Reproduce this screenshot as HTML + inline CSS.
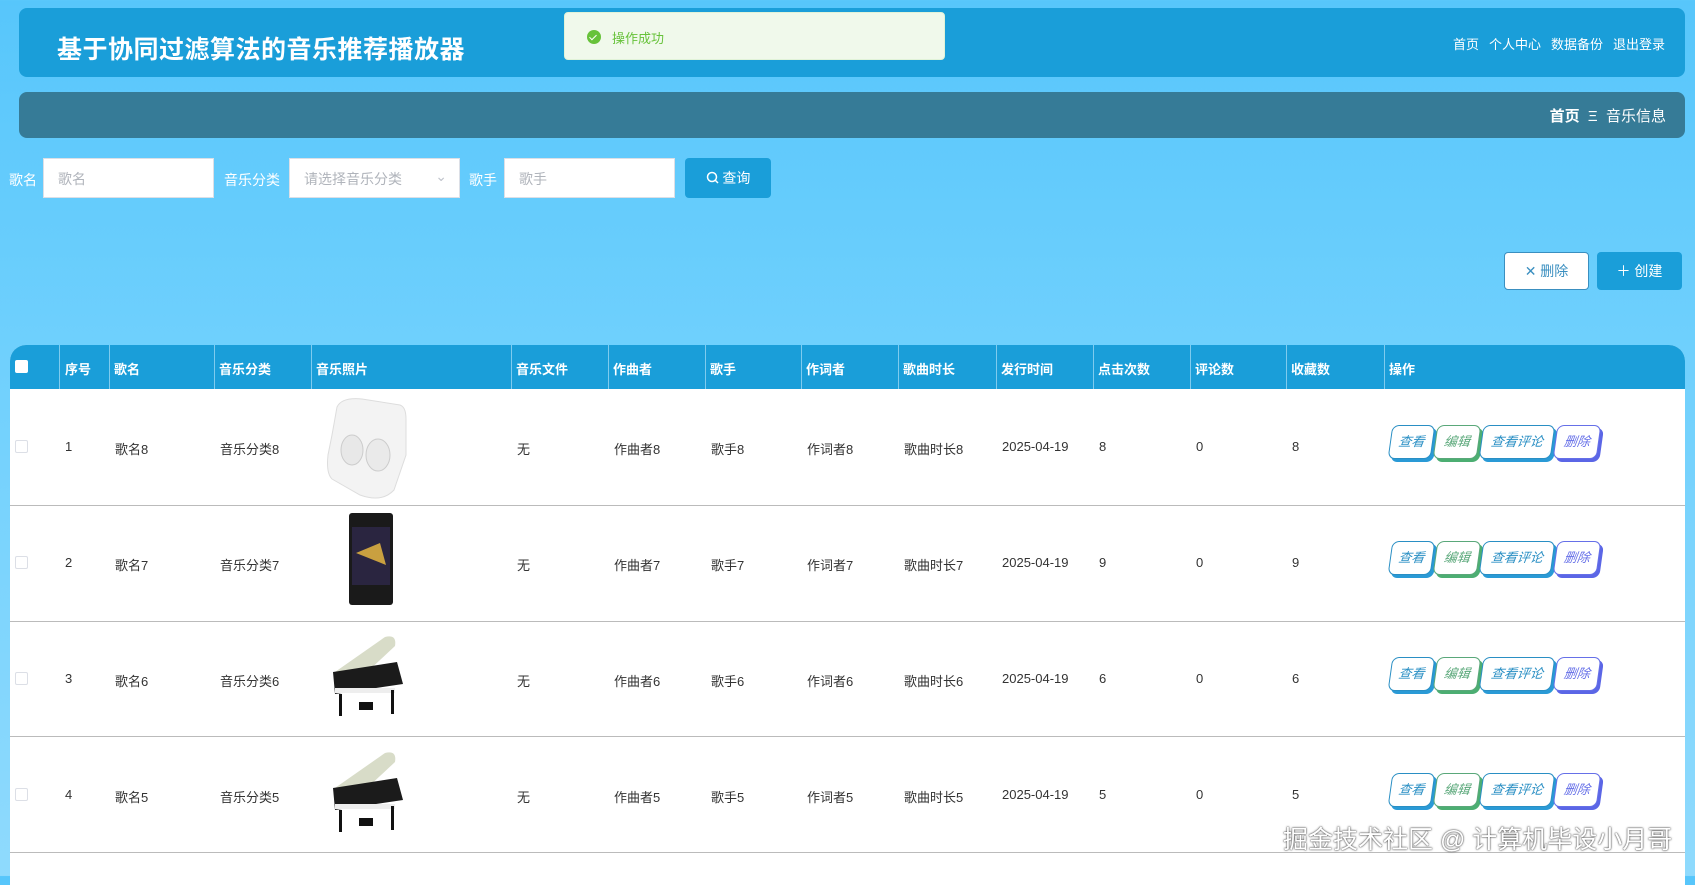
<!DOCTYPE html>
<html><head><meta charset="utf-8"><style>
*{box-sizing:border-box;margin:0;padding:0}
body{width:1695px;height:876px;overflow:hidden;font-family:"Liberation Sans","Noto Sans CJK SC",sans-serif;background:linear-gradient(180deg,#57c6fb 0%,#6fd0fd 40%,#8fdafd 100%);position:relative;color:#333}
.hdr{position:absolute;left:19px;top:8px;width:1666px;height:69px;background:#1a9ed9;border-radius:8px}
.title{position:absolute;left:38px;top:22px;font-size:25px;font-weight:bold;color:#fff;letter-spacing:0.5px}
.nav{position:absolute;right:20px;top:26px;font-size:13px;color:#fff}
.nav span{margin-left:10px}
.toast{position:absolute;left:564px;top:12px;width:381px;height:48px;background:#f0f9eb;border:1px solid #e1f3d8;border-radius:4px;font-size:13px;color:#67c23a}
.toast i{position:absolute;left:22px;top:17px;width:14px;height:14px;border-radius:50%;background:#67c23a}
.toast i:after{content:"";position:absolute;left:4px;top:3px;width:3px;height:6px;border:solid #fff;border-width:0 1.5px 1.5px 0;transform:rotate(45deg)}
.toast span{position:absolute;left:47px;top:15px}
.bc{position:absolute;left:19px;top:92px;width:1666px;height:46px;background:#367b97;border-radius:8px;color:#fff}
.bc div{position:absolute;right:19px;top:13px;font-size:15px}
.lbl{position:absolute;top:170px;font-size:14px;color:#fff}
.inp{position:absolute;top:158px;height:40px;background:#fff;border:1px solid #dcdfe6;font-size:14px;color:#b0b4bb;padding:10px 14px}
.btn{position:absolute;border-radius:4px;font-size:14px;text-align:center}
.tbl{position:absolute;left:10px;top:345px;width:1675px;height:540px;background:#fff;border-radius:16px 16px 0 0;overflow:hidden}
.th{position:absolute;top:0;height:44px;background:#1a9ed9;width:100%}
.c{position:absolute;font-size:13px}
.hc{color:#fff;font-weight:bold;top:14px}
.vl{position:absolute;top:0;width:1px;height:44px;background:#7fcbee}
.hl{position:absolute;left:0;width:100%;height:1px;background:#bbb}
.cb{position:absolute;left:5px;width:13px;height:13px;border:1px solid #dcdfe6;border-radius:2px;background:#fff}
.ab{position:absolute;height:34px;border:1px solid;border-radius:7px;background:#fff;font-size:13px;font-style:italic;text-align:center;line-height:31px;transform:skewX(-8deg)}
</style></head><body>
<div class="hdr"><div class="title">基于协同过滤算法的音乐推荐播放器</div>
<div class="nav"><span>首页</span><span>个人中心</span><span>数据备份</span><span>退出登录</span></div></div>
<div class="toast"><i></i><span>操作成功</span></div>
<div class="bc"><div><b>首页</b> &nbsp;Ξ&nbsp; 音乐信息</div></div>
<div class="lbl" style="left:9px">歌名</div><div class="inp" style="left:43px;width:171px">歌名</div>
<div class="lbl" style="left:224px">音乐分类</div><div class="inp" style="left:289px;width:171px">请选择音乐分类<span style="position:absolute;right:12px;top:9px;color:#c0c4cc">⌄</span></div>
<div class="lbl" style="left:469px">歌手</div><div class="inp" style="left:504px;width:171px">歌手</div>
<div class="btn" style="left:685px;top:158px;width:86px;height:40px;background:#1a9ed9;color:#fff;line-height:40px"><svg width="13" height="13" viewBox="0 0 13 13" style="vertical-align:-1px"><circle cx="6" cy="6" r="4.5" fill="none" stroke="#fff" stroke-width="1.5"/><path d="M9 9 L12 12" stroke="#fff" stroke-width="1.5"/></svg> 查询</div>
<div class="btn" style="left:1504px;top:252px;width:85px;height:38px;background:#fff;border:1px solid #3a8fc0;color:#3a8fc0;line-height:36px">✕ 删除</div>
<div class="btn" style="left:1597px;top:252px;width:85px;height:38px;background:#1a9ed9;color:#fff;line-height:38px">＋ 创建</div>
<div class="tbl">
<div class="th"></div>
<div style="position:absolute;left:5px;top:15px;width:13px;height:13px;background:#fff;border-radius:2px"></div>
<div class="vl" style="left:49px"></div><div class="vl" style="left:99px"></div><div class="vl" style="left:204px"></div><div class="vl" style="left:301px"></div><div class="vl" style="left:501px"></div><div class="vl" style="left:598px"></div><div class="vl" style="left:695px"></div><div class="vl" style="left:791px"></div><div class="vl" style="left:888px"></div><div class="vl" style="left:986px"></div><div class="vl" style="left:1083px"></div><div class="vl" style="left:1180px"></div><div class="vl" style="left:1276px"></div><div class="vl" style="left:1374px"></div>
<div class="c hc" style="left:55px">序号</div><div class="c hc" style="left:104px">歌名</div><div class="c hc" style="left:209px">音乐分类</div><div class="c hc" style="left:306px">音乐照片</div><div class="c hc" style="left:506px">音乐文件</div><div class="c hc" style="left:603px">作曲者</div><div class="c hc" style="left:700px">歌手</div><div class="c hc" style="left:796px">作词者</div><div class="c hc" style="left:893px">歌曲时长</div><div class="c hc" style="left:991px">发行时间</div><div class="c hc" style="left:1088px">点击次数</div><div class="c hc" style="left:1185px">评论数</div><div class="c hc" style="left:1281px">收藏数</div><div class="c hc" style="left:1379px">操作</div>

<div class="hl" style="top:160px"></div><div class="hl" style="top:276px"></div><div class="hl" style="top:391px"></div><div class="hl" style="top:507px"></div>

<div class="cb" style="top:95px"></div>
<div class="c" style="left:55px;top:94px">1</div><div class="c" style="left:105px;top:94px">歌名8</div><div class="c" style="left:210px;top:94px">音乐分类8</div>
<svg style="position:absolute;left:312px;top:50px" width="100" height="105"><path d="M15 12 Q20 2 40 4 L78 10 Q84 12 84 24 L84 60 L72 95 Q60 108 38 100 L10 84 Q4 78 6 60 L10 40Z" fill="#f3f3f3" stroke="#ddd"/><ellipse cx="30" cy="55" rx="11" ry="15" fill="#e8e8e8" stroke="#ccc"/><ellipse cx="56" cy="60" rx="12" ry="16" fill="#eaeaea" stroke="#ccc"/></svg>
<div class="c" style="left:507px;top:94px">无</div><div class="c" style="left:604px;top:94px">作曲者8</div><div class="c" style="left:701px;top:94px">歌手8</div><div class="c" style="left:797px;top:94px">作词者8</div><div class="c" style="left:894px;top:94px">歌曲时长8</div><div class="c" style="left:992px;top:94px">2025-04-19</div><div class="c" style="left:1089px;top:94px">8</div><div class="c" style="left:1186px;top:94px">0</div><div class="c" style="left:1282px;top:94px">8</div>

<div class="cb" style="top:211px"></div>
<div class="c" style="left:55px;top:210px">2</div><div class="c" style="left:105px;top:210px">歌名7</div><div class="c" style="left:210px;top:210px">音乐分类7</div>
<svg style="position:absolute;left:330px;top:168px" width="60" height="100"><rect x="9" y="0" width="44" height="92" rx="3" fill="#1a1a1a"/><rect x="12" y="14" width="38" height="58" fill="#2a2540"/><path d="M16 40 L40 30 L46 52Z" fill="#c9a040"/></svg>
<div class="c" style="left:507px;top:210px">无</div><div class="c" style="left:604px;top:210px">作曲者7</div><div class="c" style="left:701px;top:210px">歌手7</div><div class="c" style="left:797px;top:210px">作词者7</div><div class="c" style="left:894px;top:210px">歌曲时长7</div><div class="c" style="left:992px;top:210px">2025-04-19</div><div class="c" style="left:1089px;top:210px">9</div><div class="c" style="left:1186px;top:210px">0</div><div class="c" style="left:1282px;top:210px">9</div>

<div class="cb" style="top:327px"></div>
<div class="c" style="left:55px;top:326px">3</div><div class="c" style="left:105px;top:326px">歌名6</div><div class="c" style="left:210px;top:326px">音乐分类6</div>
<svg style="position:absolute;left:315px;top:287px" width="90" height="90"><path d="M10 40 L60 5 Q72 2 70 14 L40 42Z" fill="#d8dcc8"/><path d="M8 40 L72 30 L78 52 L10 62Z" fill="#1b1b1b"/><rect x="10" y="56" width="60" height="5" fill="#eee"/><rect x="14" y="62" width="3" height="22" fill="#111"/><rect x="66" y="58" width="3" height="24" fill="#111"/><rect x="34" y="70" width="14" height="8" fill="#111"/></svg>
<div class="c" style="left:507px;top:326px">无</div><div class="c" style="left:604px;top:326px">作曲者6</div><div class="c" style="left:701px;top:326px">歌手6</div><div class="c" style="left:797px;top:326px">作词者6</div><div class="c" style="left:894px;top:326px">歌曲时长6</div><div class="c" style="left:992px;top:326px">2025-04-19</div><div class="c" style="left:1089px;top:326px">6</div><div class="c" style="left:1186px;top:326px">0</div><div class="c" style="left:1282px;top:326px">6</div>

<div class="cb" style="top:443px"></div>
<div class="c" style="left:55px;top:442px">4</div><div class="c" style="left:105px;top:442px">歌名5</div><div class="c" style="left:210px;top:442px">音乐分类5</div>
<svg style="position:absolute;left:315px;top:403px" width="90" height="90"><path d="M10 40 L60 5 Q72 2 70 14 L40 42Z" fill="#d8dcc8"/><path d="M8 40 L72 30 L78 52 L10 62Z" fill="#1b1b1b"/><rect x="10" y="56" width="60" height="5" fill="#eee"/><rect x="14" y="62" width="3" height="22" fill="#111"/><rect x="66" y="58" width="3" height="24" fill="#111"/><rect x="34" y="70" width="14" height="8" fill="#111"/></svg>
<div class="c" style="left:507px;top:442px">无</div><div class="c" style="left:604px;top:442px">作曲者5</div><div class="c" style="left:701px;top:442px">歌手5</div><div class="c" style="left:797px;top:442px">作词者5</div><div class="c" style="left:894px;top:442px">歌曲时长5</div><div class="c" style="left:992px;top:442px">2025-04-19</div><div class="c" style="left:1089px;top:442px">5</div><div class="c" style="left:1186px;top:442px">0</div><div class="c" style="left:1282px;top:442px">5</div>

<div style="position:absolute;left:0;top:80px;width:100%">
<div class="ab" style="left:1380px;width:43px;color:#2a8fc4;border-color:#2a8fc4;box-shadow:3px 3px 0 #2a9ad6">查看</div><div class="ab" style="left:1425px;width:44px;color:#5aa87a;border-color:#5aa87a;box-shadow:3px 3px 0 #4cae72">编辑</div><div class="ab" style="left:1471px;width:72px;color:#2a8fc4;border-color:#2a8fc4;box-shadow:3px 3px 0 #2a9ad6">查看评论</div><div class="ab" style="left:1545px;width:44px;color:#6670e8;border-color:#6670e8;box-shadow:3px 3px 0 #5b66e6">删除</div></div>
<div style="position:absolute;left:0;top:196px;width:100%">
<div class="ab" style="left:1380px;width:43px;color:#2a8fc4;border-color:#2a8fc4;box-shadow:3px 3px 0 #2a9ad6">查看</div><div class="ab" style="left:1425px;width:44px;color:#5aa87a;border-color:#5aa87a;box-shadow:3px 3px 0 #4cae72">编辑</div><div class="ab" style="left:1471px;width:72px;color:#2a8fc4;border-color:#2a8fc4;box-shadow:3px 3px 0 #2a9ad6">查看评论</div><div class="ab" style="left:1545px;width:44px;color:#6670e8;border-color:#6670e8;box-shadow:3px 3px 0 #5b66e6">删除</div></div>
<div style="position:absolute;left:0;top:312px;width:100%">
<div class="ab" style="left:1380px;width:43px;color:#2a8fc4;border-color:#2a8fc4;box-shadow:3px 3px 0 #2a9ad6">查看</div><div class="ab" style="left:1425px;width:44px;color:#5aa87a;border-color:#5aa87a;box-shadow:3px 3px 0 #4cae72">编辑</div><div class="ab" style="left:1471px;width:72px;color:#2a8fc4;border-color:#2a8fc4;box-shadow:3px 3px 0 #2a9ad6">查看评论</div><div class="ab" style="left:1545px;width:44px;color:#6670e8;border-color:#6670e8;box-shadow:3px 3px 0 #5b66e6">删除</div></div>
<div style="position:absolute;left:0;top:428px;width:100%">
<div class="ab" style="left:1380px;width:43px;color:#2a8fc4;border-color:#2a8fc4;box-shadow:3px 3px 0 #2a9ad6">查看</div><div class="ab" style="left:1425px;width:44px;color:#5aa87a;border-color:#5aa87a;box-shadow:3px 3px 0 #4cae72">编辑</div><div class="ab" style="left:1471px;width:72px;color:#2a8fc4;border-color:#2a8fc4;box-shadow:3px 3px 0 #2a9ad6">查看评论</div><div class="ab" style="left:1545px;width:44px;color:#6670e8;border-color:#6670e8;box-shadow:3px 3px 0 #5b66e6">删除</div></div>
</div>
<div style="position:absolute;left:1283px;top:820px;font-size:25px;color:#fff;text-shadow:0 0 2px #444,0 0 1px #444">掘金技术社区 @ 计算机毕设小月哥</div>
</body></html>
